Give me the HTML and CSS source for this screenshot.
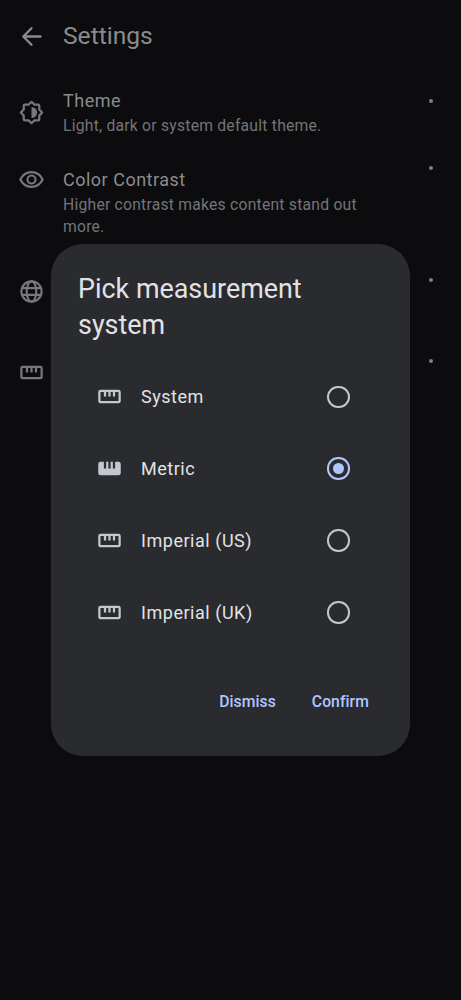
FILE: index.html
```
<!DOCTYPE html>
<html lang="en">
<head>
<meta charset="utf-8">
<title>Settings</title>
<link rel="stylesheet" href="styles.css">
</head>
<body>
<svg class="defs" aria-hidden="true">
  <symbol id="ruler" viewBox="0 0 24 24"><rect x="3" y="7" width="18" height="10" rx="1" fill="none" stroke="currentColor" stroke-width="2"/><path d="M8 7v5M12 7v5M16 7v5" fill="none" stroke="currentColor" stroke-width="2"/></symbol>
  <symbol id="ruler-filled" viewBox="0 0 24 24"><path fill="currentColor" d="M4 18a2 2 0 0 1-2-2V8a2 2 0 0 1 2-2h3v6h2V6h2v6h2V6h2v6h2V6h3a2 2 0 0 1 2 2v8a2 2 0 0 1-2 2z"/></symbol>
</svg>
<main class="screen">
  <header class="app-bar">
    <svg class="icon back" viewBox="0 0 24 24"><path d="M20 12H5.500M12 4.700 4.700 12l7.300 7.300" fill="none" stroke="currentColor" stroke-width="2.100" stroke-linecap="round" stroke-linejoin="round"/></svg>
    <h1>Settings</h1>
  </header>
  <section class="item theme">
    <svg class="icon" viewBox="0 0 24 24"><path d="M12 2.500 14.700 5.100H17.900Q18.900 5.100 18.900 6.100V9.300L21.500 12 18.900 14.700V17.900Q18.900 18.900 17.900 18.900H14.700L12 21.500 9.300 18.900H6.100Q5.100 18.900 5.100 17.900V14.700L2.500 12 5.100 9.300V6.100Q5.100 5.100 6.100 5.100H9.300Z" fill="none" stroke="currentColor" stroke-width="2" stroke-linejoin="round"/><path d="M12 7v10a5 5 0 0 0 0-10z" fill="currentColor"/></svg>
    <div class="copy"><h2>Theme</h2><p>Light, dark or system default theme.</p></div>
    <i class="dot"></i>
  </section>
  <section class="item contrast">
    <svg class="icon" viewBox="0 0 24 24"><path d="M2.100 12C4 8 7.700 5.500 12 5.500S20 8 21.900 12C20 16 16.300 18.500 12 18.500S4 16 2.100 12z" fill="none" stroke="currentColor" stroke-width="2" stroke-linejoin="round"/><circle cx="12" cy="12" r="3.600" fill="none" stroke="currentColor" stroke-width="1.900"/></svg>
    <div class="copy"><h2>Color Contrast</h2><p>Higher contrast makes content stand out more.</p></div>
    <i class="dot"></i>
  </section>
  <section class="item language">
    <svg class="icon" viewBox="0 0 24 24"><g fill="none" stroke="currentColor" stroke-width="1.900"><circle cx="12" cy="12" r="9"/><ellipse cx="12" cy="12" rx="4.300" ry="9"/><path d="M3.500 9h17M3.500 15h17"/></g></svg>
    <i class="dot"></i>
  </section>
  <section class="item units">
    <svg class="icon"><use href="#ruler"/></svg>
    <i class="dot"></i>
  </section>
</main>
<div class="dialog" role="dialog">
  <h2 class="dialog-title">Pick measurement system</h2>
  <div class="options">
    <div class="option"><svg class="icon"><use href="#ruler"/></svg><span>System</span><i class="radio"></i></div>
    <div class="option"><svg class="icon"><use href="#ruler-filled"/></svg><span>Metric</span><i class="radio selected"></i></div>
    <div class="option"><svg class="icon"><use href="#ruler"/></svg><span>Imperial (US)</span><i class="radio"></i></div>
    <div class="option"><svg class="icon"><use href="#ruler"/></svg><span>Imperial (UK)</span><i class="radio"></i></div>
  </div>
  <div class="actions"><button>Dismiss</button><button>Confirm</button></div>
</div>
</body>
</html>
```
FILE: styles.css
```
* { box-sizing: border-box; }
body { margin: 0; background: #0c0c0e; font-family: Roboto, "Liberation Sans", sans-serif; }
h1, h2, p { margin: 0; font-weight: 400; }
.defs { position: absolute; width: 0; height: 0; }
.screen { height: 1000px; overflow: hidden; color: #8b8b8d; }
.icon { width: 27px; height: 27px; flex: none; display: block; }
.app-bar { height: 72px; padding-left: 18px; display: flex; align-items: center; gap: 18px; }
.app-bar h1 { font-size: 24.6px; line-height: 32px; }
.item { display: flex; align-items: flex-start; padding: 0 28.5px 0 18px; }
.item .icon { color: #77777d; }
.copy { width: 314px; margin-left: 18px; }
.copy h2 { font-size: 18px; line-height: 27px; letter-spacing: 0.5px; }
.copy p { font-size: 15.7px; line-height: 22.4px; letter-spacing: 0.23px; color: #747479; }
.dot { width: 4px; height: 4px; margin-left: auto; border-radius: 50%; background: #7180ac; }
.theme { height: 78px; padding-top: 15px; }
.theme .icon { margin-top: 12px; }
.theme .copy p { padding-top: 1px; }
.theme .dot { margin-top: 11.5px; }
.contrast { height: 112px; padding-top: 16px; }
.contrast .copy p { padding-top: 1px; }
.contrast .dot, .language .dot, .units .dot { margin-top: -0.5px; }
.language { height: 81px; padding-top: 16px; }
.units { height: 60px; padding-top: 16px; }
.dialog { position: absolute; left: 51px; top: 244px; width: 359px; height: 512px; padding: 27px; border-radius: 32px; background: #2a2b2e; color: #e2e2e6; }
.dialog-title { font-size: 26.9px; line-height: 36px; }
.options { margin-top: 18px; }
.option { height: 71.8px; padding: 0 33.5px 0 18px; display: flex; align-items: center; font-size: 18px; letter-spacing: 0.53px; }
.option .icon { margin-right: 18px; color: #c5c6d0; }
.radio { width: 22.5px; height: 22.5px; margin-left: auto; display: grid; place-items: center; border: 2.3px solid #c5c6ca; border-radius: 50%; }
.radio.selected { border-color: #b0c6ff; }
.radio.selected::before { content: ""; width: 11.5px; height: 11.5px; border-radius: 50%; background: #b0c6ff; }
.actions { display: flex; justify-content: flex-end; gap: 36px; margin-top: 43px; padding-right: 14px; }
.actions button { padding: 0; border: 0; background: none; color: #b0c6ff; font: 500 15.7px/22px Roboto, sans-serif; letter-spacing: 0.08px; }
```
